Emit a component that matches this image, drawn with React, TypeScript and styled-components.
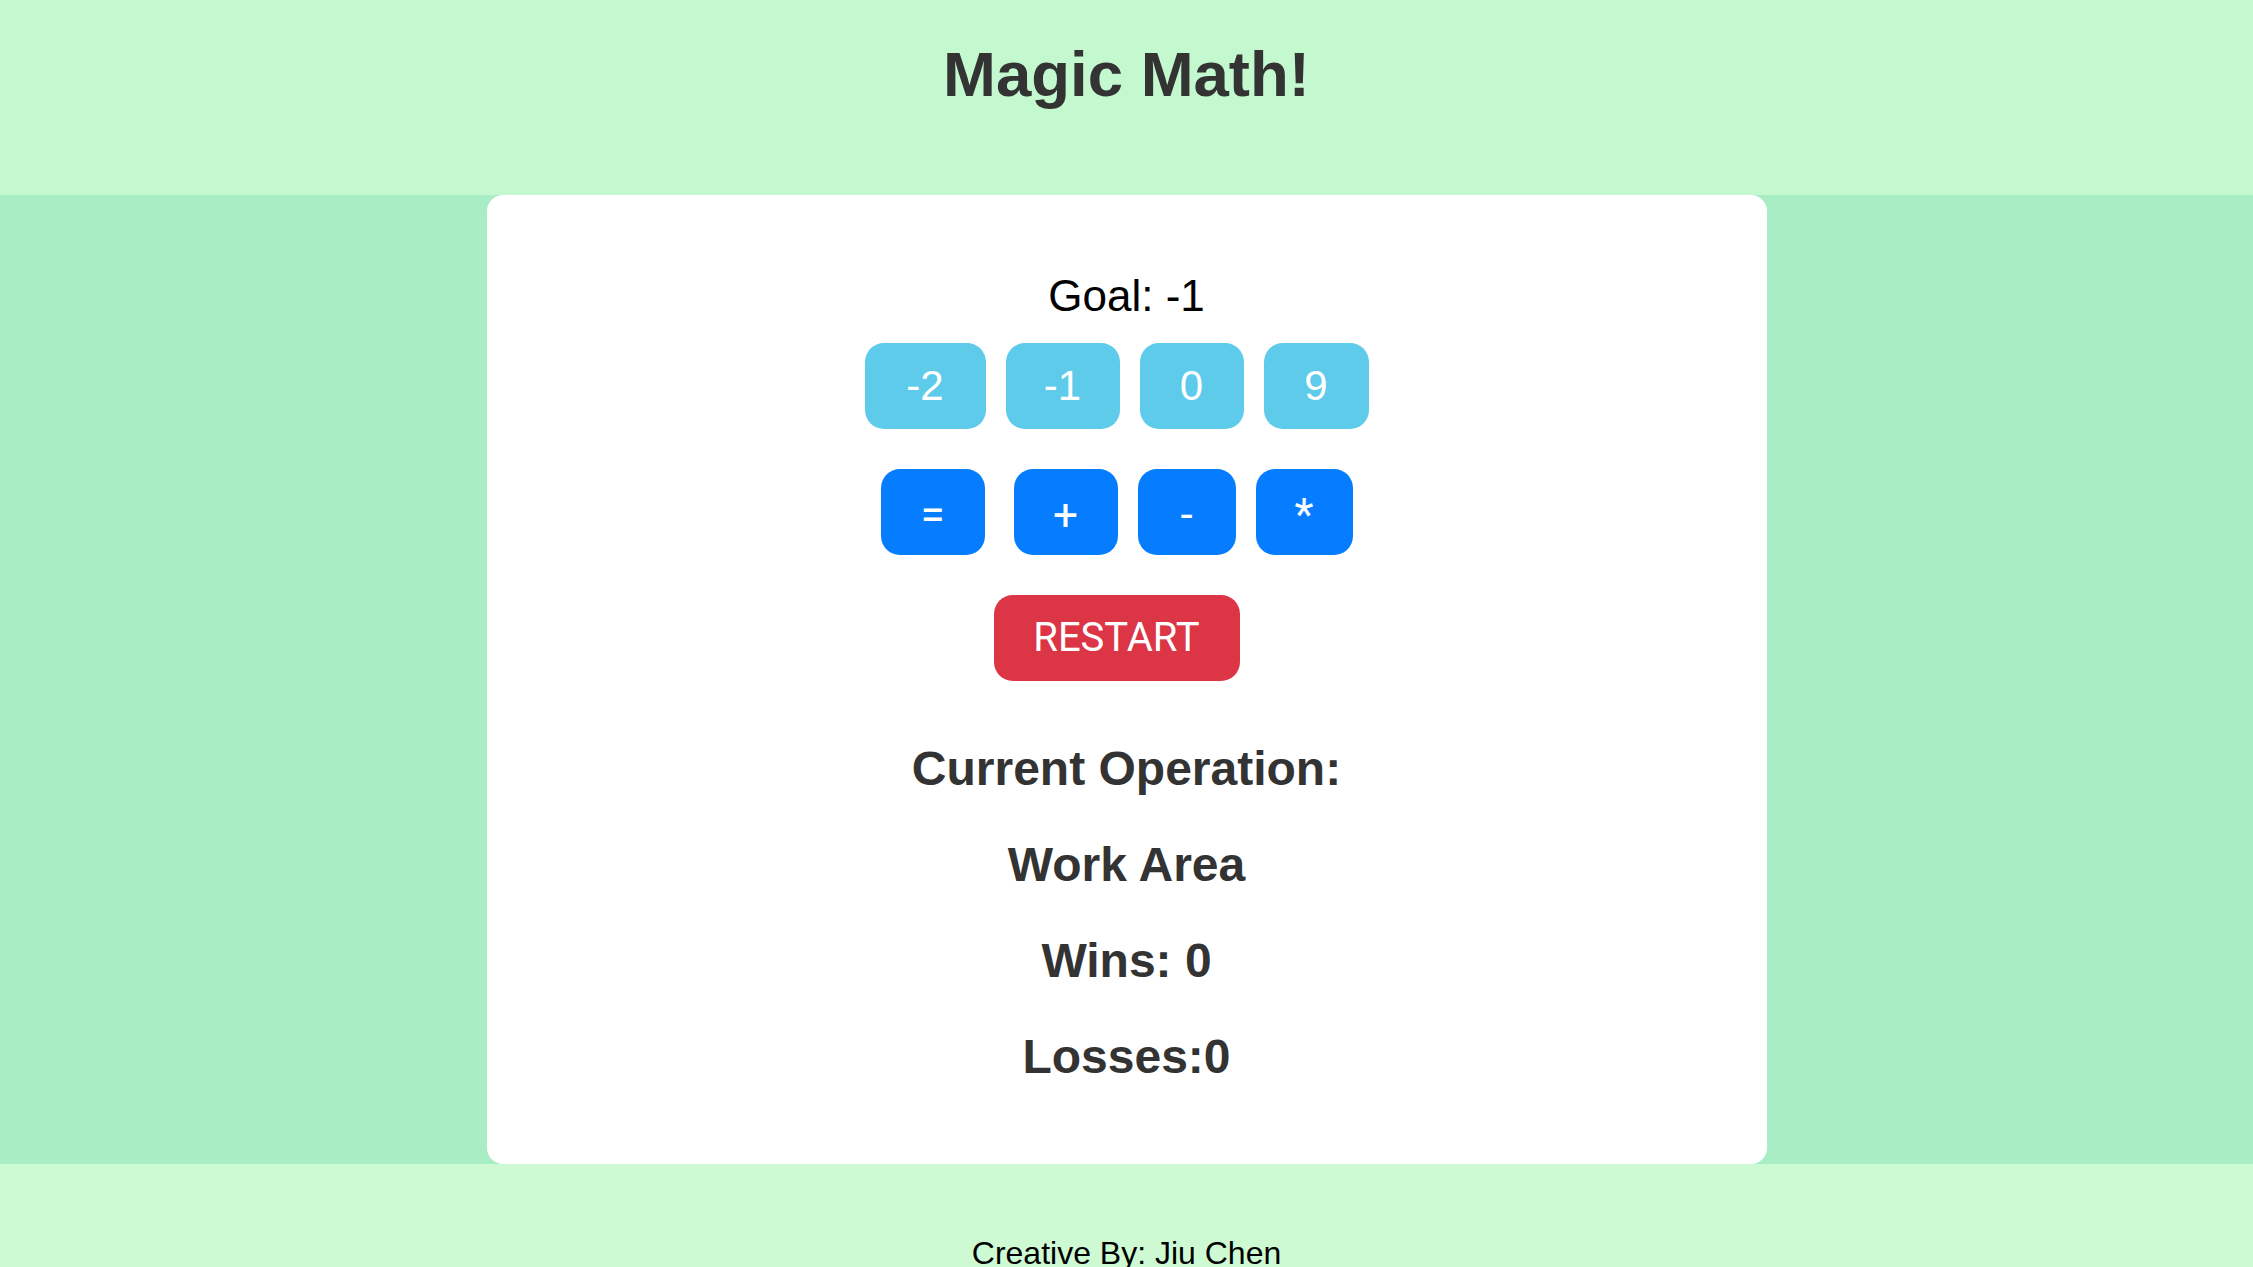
import React from "react";
import styled, { createGlobalStyle } from "styled-components";

const GlobalStyle = createGlobalStyle`
  html, body {
    margin: 0;
    padding: 0;
    background: #cefad3;
  }
  body {
    font-family: "Liberation Sans", Arial, sans-serif;
  }
`;

const Page = styled.div`
  display: flex;
  flex-direction: column;
  min-height: 100vh;
`;

const Header = styled.header`
  box-sizing: border-box;
  height: 195px;
  padding-top: 37px;
  background: #c4f8cf;
  text-align: center;
`;

const Title = styled.h1`
  margin: 0;
  font-family: "Liberation Sans", Arial, sans-serif;
  font-weight: 700;
  font-size: 63.5px;
  line-height: 74px;
  color: #333333;
`;

const Band = styled.main`
  background: #a8edc3;
`;

const Card = styled.section`
  box-sizing: border-box;
  width: 1280px;
  margin: 0 auto;
  background: #ffffff;
  border-radius: 16px;
  padding: 76px 0 80px;
  display: flex;
  flex-direction: column;
  align-items: center;
`;

const Goal = styled.div`
  font-family: "Liberation Sans", Arial, sans-serif;
  font-size: 44px;
  line-height: 50px;
  color: #000000;
  margin-bottom: 22px;
`;

const ButtonRow = styled.div<{ $gapAfter?: number }>`
  display: flex;
  justify-content: center;
  margin-bottom: ${(p) => p.$gapAfter ?? 0}px;
`;

const Btn = styled.button<{
  $w: number;
  $mr?: number;
  $bg: string;
  $font: string;
  $size: number;
  $weight?: number;
  $nudge?: number;
}>`
  box-sizing: border-box;
  width: ${(p) => p.$w}px;
  height: 86px;
  margin: 0 ${(p) => p.$mr ?? 20}px 0 0;
  padding: ${(p) => p.$nudge ?? 0}px 0 0;
  border: none;
  border-radius: 19px;
  background: ${(p) => p.$bg};
  color: #ffffff;
  font-family: ${(p) => p.$font};
  font-size: ${(p) => p.$size}px;
  font-weight: ${(p) => p.$weight ?? 400};
  line-height: 1;
  display: flex;
  align-items: center;
  justify-content: center;
  cursor: pointer;
`;

const Stat = styled.h2<{ $mb?: number }>`
  margin: 0 0 ${(p) => p.$mb ?? 42}px;
  font-family: "Liberation Sans", Arial, sans-serif;
  font-weight: 700;
  font-size: 48px;
  line-height: 54px;
  color: #333333;
`;

const Footer = styled.footer`
  background: #cefad3;
  padding: 71px 0 40px;
  text-align: center;
`;

const Credit = styled.p`
  margin: 0;
  font-family: "Liberation Sans", Arial, sans-serif;
  font-size: 32px;
  line-height: 37px;
  color: #000000;
`;

const NUM_FONT = `"Liberation Sans", Arial, sans-serif`;
const OP_FONT = `Roboto, "Liberation Sans", Arial, sans-serif`;

const numbers = [
  { label: "-2", w: 121 },
  { label: "-1", w: 114 },
  { label: "0", w: 104 },
  { label: "9", w: 105 },
];

const ops = [
  { label: "=", w: 104, mr: 29 },
  { label: "+", w: 104, mr: 20 },
  { label: "-", w: 98, mr: 20 },
  { label: "*", w: 97, mr: 20 },
];

export default function App() {
  return (
    <Page>
      <GlobalStyle />
      <Header>
        <Title>Magic Math!</Title>
      </Header>
      <Band>
        <Card>
          <Goal>Goal: -1</Goal>
          <ButtonRow $gapAfter={40}>
            {numbers.map((n) => (
              <Btn key={n.label} $w={n.w} $bg="#5fcbeb" $font={NUM_FONT} $size={42}>
                {n.label}
              </Btn>
            ))}
          </ButtonRow>
          <ButtonRow $gapAfter={40}>
            {ops.map((o) => (
              <Btn
                key={o.label}
                $w={o.w}
                $mr={o.mr}
                $bg="#057dfe"
                $font={OP_FONT}
                $size={44}
                $weight={400}
                $nudge={5}
              >
                {o.label}
              </Btn>
            ))}
          </ButtonRow>
          <ButtonRow $gapAfter={61}>
            <Btn $w={246} $bg="#dc3545" $font={OP_FONT} $size={40}>
              RESTART
            </Btn>
          </ButtonRow>
          <Stat>Current Operation:</Stat>
          <Stat>Work Area</Stat>
          <Stat>Wins: 0</Stat>
          <Stat $mb={0}>Losses:0</Stat>
        </Card>
      </Band>
      <Footer>
        <Credit>Creative By: Jiu Chen</Credit>
      </Footer>
    </Page>
  );
}
